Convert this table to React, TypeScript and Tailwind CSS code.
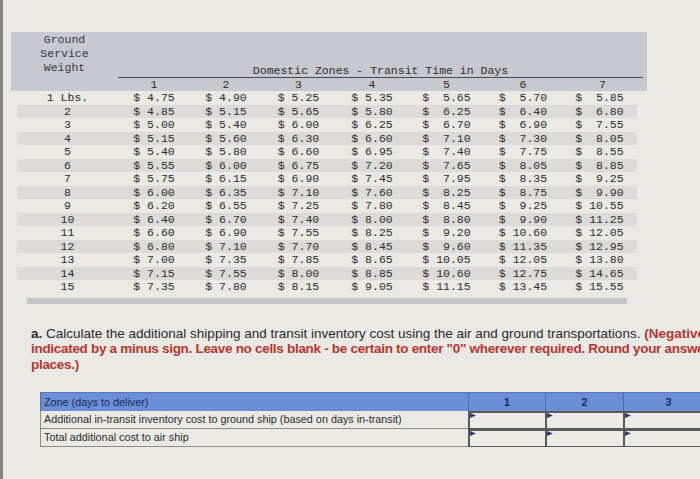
import React from "react";

const rows: [string, string[]][] = [
  ["1 Lbs.", ["4.75", "4.90", "5.25", "5.35", "5.65", "5.70", "5.85"]],
  ["2", ["4.85", "5.15", "5.65", "5.80", "6.25", "6.40", "6.80"]],
  ["3", ["5.00", "5.40", "6.00", "6.25", "6.70", "6.90", "7.55"]],
  ["4", ["5.15", "5.60", "6.30", "6.60", "7.10", "7.30", "8.05"]],
  ["5", ["5.40", "5.80", "6.60", "6.95", "7.40", "7.75", "8.55"]],
  ["6", ["5.55", "6.00", "6.75", "7.20", "7.65", "8.05", "8.85"]],
  ["7", ["5.75", "6.15", "6.90", "7.45", "7.95", "8.35", "9.25"]],
  ["8", ["6.00", "6.35", "7.10", "7.60", "8.25", "8.75", "9.90"]],
  ["9", ["6.20", "6.55", "7.25", "7.80", "8.45", "9.25", "10.55"]],
  ["10", ["6.40", "6.70", "7.40", "8.00", "8.80", "9.90", "11.25"]],
  ["11", ["6.60", "6.90", "7.55", "8.25", "9.20", "10.60", "12.05"]],
  ["12", ["6.80", "7.10", "7.70", "8.45", "9.60", "11.35", "12.95"]],
  ["13", ["7.00", "7.35", "7.85", "8.65", "10.05", "12.05", "13.80"]],
  ["14", ["7.15", "7.55", "8.00", "8.85", "10.60", "12.75", "14.65"]],
  ["15", ["7.35", "7.80", "8.15", "9.05", "11.15", "13.45", "15.55"]],
];

function fmt(v: string, i: number) {
  if (i < 4) return "$ " + v;
  return v.length === 4 ? "$  " + v : "$ " + v;
}

function Flag() {
  return (
    <svg className="absolute left-0 top-0" width="6" height="6" viewBox="0 0 6 6">
      <polygon points="0,0 6,2.5 0,5" fill="#2a3f6e" />
    </svg>
  );
}

export default function App() {
  const mono = { fontFamily: '"Liberation Mono", "DejaVu Sans Mono", monospace' };
  return (
    <div className="w-[700px] h-[479px] overflow-hidden flex bg-[#eae9e4]">
      <div className="w-[3px] bg-[#858585] shrink-0" />
      <div className="flex-1 flex flex-col pt-[32px] min-w-0">
        {/* rate table */}
        <div className="ml-[8px] w-[636px] text-[#2c2c2c] text-[11.5px]" style={mono}>
          <div className="h-[59px] bg-[#c7c9cf] grid grid-cols-[107px_1fr]">
            <div className="pt-[1px] text-center leading-[14px] text-[#353941]">
              <div>Ground</div>
              <div>Service</div>
              <div>Weight</div>
            </div>
            <div className="flex flex-col justify-end pr-[4px]">
              <div className="text-center leading-[13px] whitespace-pre">Domestic Zones - Transit Time in Days</div>
              <div className="h-[1.5px] bg-[#4a4c52]" />
              <div className="grid grid-cols-[72px_72px_73px_74px_75px_78px_81px] h-[13px] leading-[13px] text-center">
                {[1, 2, 3, 4, 5, 6, 7].map((n) => (
                  <div key={n}>{n}</div>
                ))}
              </div>
            </div>
          </div>
          {rows.map(([w, vals], r) => (
            <div
              key={w}
              className={
                "ml-[6px] mr-[10px] h-[13.5px] leading-[13.5px] grid grid-cols-[101px_72px_72px_73px_74px_75px_78px_75px] " +
                (r % 2 === 1 ? "bg-[#dcdbd7]" : "")
              }
            >
              <div className="text-center">{w}</div>
              {vals.map((v, i) => (
                <div key={i} className="text-center whitespace-pre">
                  {fmt(v, i)}
                </div>
              ))}
            </div>
          ))}
          <div className="mt-[4px] ml-[16px] w-[600px] h-[6px] bg-[#c4c4c4]" />
        </div>

        {/* question text */}
        <div
          className="mt-[22px] ml-[28px] text-[13.5px] leading-[15.5px] whitespace-nowrap text-[#2a2a2a]"
          style={{ fontFamily: '"Liberation Sans", Arial, sans-serif' }}
        >
          <div>
            <b>a.</b> Calculate the additional shipping and transit inventory cost using the air and ground
            transportations. <b className="text-[#b8352f]">(Negative values should be</b>
          </div>
          <div className="font-bold text-[#b8352f] tracking-[-0.3px]">
            indicated by a minus sign. Leave no cells blank - be certain to enter "0" wherever required. Round your answers to 2 decimal
          </div>
          <div className="font-bold text-[#b8352f] tracking-[-0.3px]">places.)</div>
        </div>

        {/* answer table */}
        <div
          className="mt-[20px] ml-[37px] text-[10.8px] text-[#2b2b2b]"
          style={{ fontFamily: '"Liberation Sans", Arial, sans-serif' }}
        >
          <div className="grid grid-cols-[428px_77px_78px_90px] h-[19px] leading-[18px] bg-[#6b8fd7] border-t border-[#5677c0] text-[#1b2b5c]">
            <div className="pl-[3px] border-l border-[#4d6cb0]">Zone (days to deliver)</div>
            <div className="text-center font-bold border-l border-[#4d6cb0]">1</div>
            <div className="text-center font-bold border-l border-[#4d6cb0]">2</div>
            <div className="text-center font-bold border-l border-[#4d6cb0]">3</div>
          </div>
          {[
            "Additional in-transit inventory cost to ground ship (based on days in-transit)",
            "Total additional cost to air ship",
          ].map((t) => (
            <div key={t} className="grid grid-cols-[428px_77px_78px_90px] h-[18px] leading-[17px]">
              <div className="pl-[3px] border-l border-b border-[#8d8d8d]">{t}</div>
              {[0, 1, 2].map((i) => (
                <div key={i} className="relative border-l-2 border-t-2 border-b border-[#5a5a5a] bg-[#ecebe6]">
                  <Flag />
                </div>
              ))}
            </div>
          ))}
        </div>
      </div>
    </div>
  );
}
